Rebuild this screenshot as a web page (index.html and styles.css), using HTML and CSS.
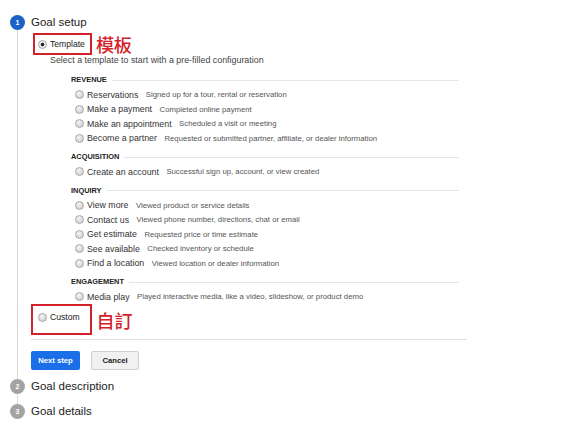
FILE: index.html
```html
<!DOCTYPE html>
<html lang="en">
<head>
    <meta charset="UTF-8">
    <meta name="viewport" content="width=device-width, initial-scale=1.0">
    <title>Goal setup</title>
    <link rel="stylesheet" href="styles.css">
</head>
<body>
    <div class="steps">
        <div class="step">
            <div class="rail">
                <div class="num active">1</div>
                <div class="rail-line"></div>
            </div>
            <div class="step-body first">
                <div class="title">Goal setup</div>

                <div class="pick-row">
                    <div class="mark mark-template">
                        <span class="radio checked"></span>
                        <span class="pick-label">Template</span>
                    </div>
                    <span class="note">模板</span>
                </div>
                <div class="hint">Select a template to start with a pre-filled configuration</div>

                <div class="sections">
                    <div class="group first-group">
                        <div class="group-head"><span>REVENUE</span><i></i></div>
                        <div class="option"><span class="radio"></span><span class="opt-label">Reservations</span><span class="opt-desc">Signed up for a tour, rental or reservation</span></div>
                        <div class="option"><span class="radio"></span><span class="opt-label">Make a payment</span><span class="opt-desc">Completed online payment</span></div>
                        <div class="option"><span class="radio"></span><span class="opt-label">Make an appointment</span><span class="opt-desc">Scheduled a visit or meeting</span></div>
                        <div class="option"><span class="radio"></span><span class="opt-label">Become a partner</span><span class="opt-desc">Requested or submitted partner, affiliate, or dealer information</span></div>
                    </div>
                    <div class="group">
                        <div class="group-head"><span>ACQUISITION</span><i></i></div>
                        <div class="option"><span class="radio"></span><span class="opt-label">Create an account</span><span class="opt-desc">Successful sign up, account, or view created</span></div>
                    </div>
                    <div class="group">
                        <div class="group-head"><span>INQUIRY</span><i></i></div>
                        <div class="option"><span class="radio"></span><span class="opt-label">View more</span><span class="opt-desc">Viewed product or service details</span></div>
                        <div class="option"><span class="radio"></span><span class="opt-label">Contact us</span><span class="opt-desc">Viewed phone number, directions, chat or email</span></div>
                        <div class="option"><span class="radio"></span><span class="opt-label">Get estimate</span><span class="opt-desc">Requested price or time estimate</span></div>
                        <div class="option"><span class="radio"></span><span class="opt-label">See available</span><span class="opt-desc">Checked inventory or schedule</span></div>
                        <div class="option"><span class="radio"></span><span class="opt-label">Find a location</span><span class="opt-desc">Viewed location or dealer information</span></div>
                    </div>
                    <div class="group">
                        <div class="group-head"><span>ENGAGEMENT</span><i></i></div>
                        <div class="option"><span class="radio"></span><span class="opt-label">Media play</span><span class="opt-desc">Played interactive media, like a video, slideshow, or product demo</span></div>
                    </div>
                </div>

                <div class="pick-row custom-row">
                    <div class="mark mark-custom">
                        <span class="radio"></span>
                        <span class="pick-label">Custom</span>
                    </div>
                    <span class="note">自訂</span>
                </div>

                <div class="divider"></div>

                <div class="actions">
                    <button class="btn btn-primary">Next step</button>
                    <button class="btn btn-cancel">Cancel</button>
                </div>
            </div>
        </div>

        <div class="step">
            <div class="rail">
                <div class="num">2</div>
                <div class="rail-line"></div>
            </div>
            <div class="step-body second">
                <div class="title">Goal description</div>
            </div>
        </div>

        <div class="step">
            <div class="rail">
                <div class="num">3</div>
            </div>
            <div class="step-body">
                <div class="title">Goal details</div>
            </div>
        </div>
    </div>
</body>
</html>
```

FILE: styles.css
```css
body {
    margin: 0;
    background: #fff;
    font-family: "Liberation Sans", Arial, sans-serif;
    color: #333;
}
.steps {
    padding: 15px 0 0 10px;
}
.step {
    display: flex;
    gap: 6px;
}
.rail {
    display: flex;
    flex-direction: column;
    align-items: center;
    width: 15px;
    flex: none;
}
.num {
    width: 15px;
    height: 15px;
    border-radius: 50%;
    background: #a3a3a3;
    color: #fff;
    font-size: 7px;
    font-weight: bold;
    line-height: 15px;
    text-align: center;
}
.num.active {
    background: #1b62c7;
}
.rail-line {
    flex: 1;
    width: 1px;
    background: #d8d8d8;
}
.step-body {
    flex: 1;
}
.step-body.first {
    padding-bottom: 9px;
}
.step-body.second {
    padding-bottom: 10px;
}
.title {
    font-size: 11.5px;
    line-height: 15px;
    color: #222;
}
.pick-row {
    display: flex;
    align-items: center;
    gap: 4px;
    margin-top: 3px;
    margin-left: 2px;
}
.custom-row {
    margin-top: 0;
    margin-left: 0;
    gap: 5px;
}
.mark {
    display: flex;
    align-items: center;
    border: 2px solid #d3222a;
}
.mark-template {
    height: 18px;
    padding: 0 5px 0 2.5px;
}
.mark-custom {
    align-items: flex-start;
    padding: 5px 10px 10px 4.5px;
}
.mark-custom .radio {
    margin-top: 1.5px;
}
.pick-label {
    font-size: 8.6px;
    line-height: 12px;
    color: #222;
}
.note {
    font-family: "Noto Sans CJK TC", "Noto Sans CJK SC", sans-serif;
    font-size: 18px;
    font-weight: 500;
    line-height: 18px;
    color: #d3222a;
}
.hint {
    padding-left: 19px;
    font-size: 8.9px;
    line-height: 11px;
    color: #444;
}
.sections {
    width: 388px;
    padding-left: 40px;
}
.group {
    margin-top: 6.5px;
}
.group.first-group {
    margin-top: 9px;
}
.group-head {
    display: flex;
    align-items: center;
    gap: 5px;
    margin-bottom: 2.5px;
    font-size: 7.4px;
    font-weight: bold;
    line-height: 10px;
    color: #222;
}
.group-head i {
    flex: 1;
    height: 1px;
    background: #e6e6e6;
}
.option {
    display: flex;
    align-items: center;
    height: 14.5px;
    padding-left: 3.5px;
    white-space: nowrap;
}
.radio {
    flex: none;
    width: 9px;
    height: 9px;
    box-sizing: border-box;
    margin-right: 3.5px;
    border: 1px solid #a9a9a9;
    border-radius: 50%;
    background: radial-gradient(circle at 40% 35%, #f6f6f6, #c4c4c4);
}
.radio.checked {
    background: radial-gradient(circle, #2b2b2b 0 1.6px, #f4f4f4 2.2px, #d6d6d6);
}
.opt-label {
    font-size: 8.8px;
    color: #333;
}
.opt-desc {
    margin-left: 7.5px;
    font-size: 7.75px;
    color: #555;
}
.divider {
    width: 436px;
    height: 1px;
    margin-top: 4px;
    background: #e0e0e0;
}
.actions {
    display: flex;
    gap: 11px;
    margin-top: 11px;
}
.btn {
    height: 19px;
    padding: 0;
    border-radius: 2px;
    font-family: "Liberation Sans", Arial, sans-serif;
    font-size: 7.7px;
    font-weight: bold;
}
.btn-primary {
    width: 49px;
    border: none;
    background: #1a6fe8;
    color: #fff;
}
.btn-cancel {
    width: 48px;
    border: 1px solid #d0d0d0;
    background: #f1f1f1;
    color: #222;
}
```
